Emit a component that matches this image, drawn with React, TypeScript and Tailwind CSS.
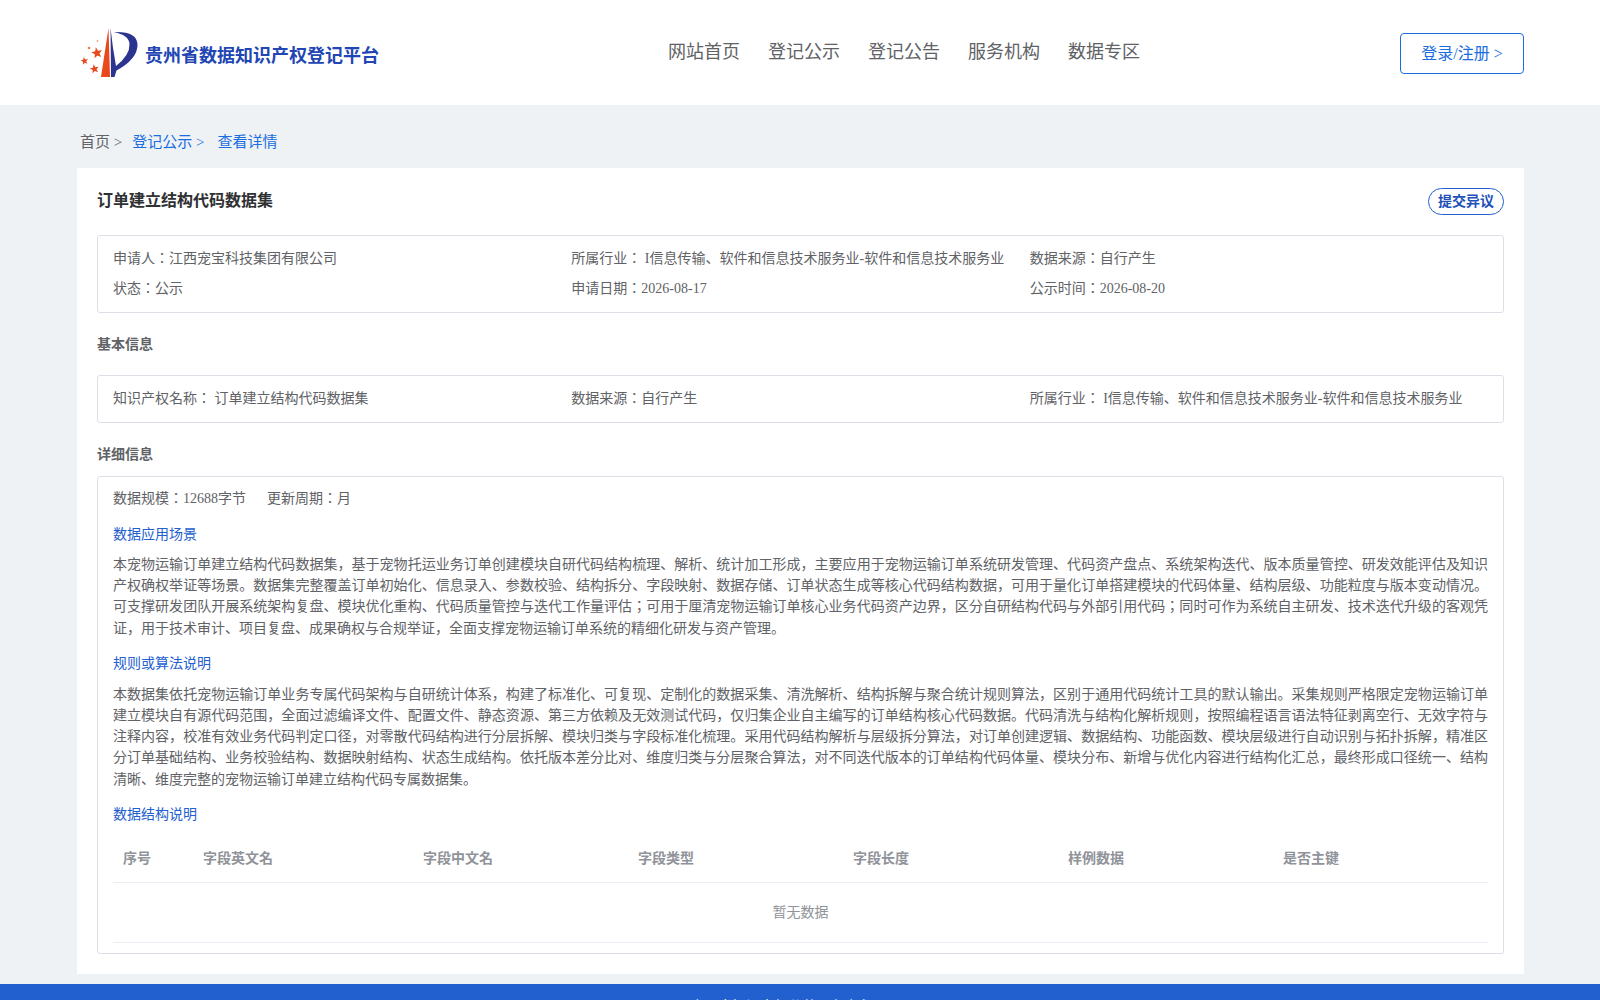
import React from 'react';

const infoBox = 'rounded-[3px] border border-[#dcdfe6] px-[15px]';
const blueLabel = 'text-[14px] leading-[21px] text-[#2260cf]';

const columns = [
  { title: '序号', width: 'w-[80px]' },
  { title: '字段英文名', width: 'w-[220px]' },
  { title: '字段中文名', width: 'w-[215px]' },
  { title: '字段类型', width: 'w-[215px]' },
  { title: '字段长度', width: 'w-[215px]' },
  { title: '样例数据', width: 'w-[215px]' },
  { title: '是否主键', width: 'w-[215px]' },
];

const Star = ({ x, y, r }: { x: number; y: number; r: number }) => {
  const pts = Array.from({ length: 10 }, (_, i) => {
    const a = -Math.PI / 2 + (i * Math.PI) / 5 - 0.2;
    const d = i % 2 === 0 ? r : r * 0.42;
    return `${(x + d * Math.cos(a)).toFixed(2)},${(y + d * Math.sin(a)).toFixed(2)}`;
  });
  return <polygon points={pts.join(' ')} fill="#e8481c" />;
};

const Logo = () => (
  <svg width="58" height="50" viewBox="0 0 58 50" className="shrink-0">
    {/* red wedge */}
    <path d="M21 49 L28.5 0 L30 49 Z" fill="#e8481c" />
    {/* blue stem and bowl */}
    <path d="M30.5 0 L31 49 L34.5 49 L36.5 42.5 Q57.5 31 57.5 17 Q57.5 3 33.5 4 Q49 7 49.5 16 Q50 27 36 38 L33 20 Z" fill="#2b3590" />
    <Star x={17} y={25} r={5.8} />
    <Star x={4.5} y={33} r={4} />
    <Star x={14.5} y={41} r={4.8} />
    <circle cx="9" cy="20" r="1.3" fill="#ee7a55" />
    <circle cx="17.5" cy="13" r="0.9" fill="#ee9a80" />
  </svg>
);

const InfoCell = ({ children }: { children: React.ReactNode }) => (
  <div className="whitespace-nowrap text-[14px] leading-[30px] text-[#606266]">{children}</div>
);

export default function App() {
  return (
    <div className="h-[1000px] overflow-hidden bg-[#eff2f5] font-['Liberation_Serif','Noto_Sans_CJK_JP',serif]">
      <header className="flex h-[105px] items-center justify-between bg-white pl-[80px] pr-[76px]">
        <div className="flex items-center">
          <Logo />
          <span className="ml-[7px] mt-[7px] text-[18px] font-bold text-[#2146b4]">贵州省数据知识产权登记平台</span>
        </div>
        <nav className="ml-[29px] flex gap-[28px] text-[18px] text-[#606266]">
          <span>网站首页</span>
          <span>登记公示</span>
          <span>登记公告</span>
          <span>服务机构</span>
          <span>数据专区</span>
        </nav>
        <button className="mt-[1px] h-[41px] w-[124px] rounded-[4px] border border-[#1a6ee0] pt-[2px] text-[16px] text-[#1a6ee0]">
          登录/注册 &gt;
        </button>
      </header>

      <div className="mx-[76px] flex h-[63px] items-center pl-[4px] pt-[12px] text-[15px] text-[#606266]">
        <span>首页 &gt;</span>
        <span className="ml-[10px] text-[#1a6ee0]">登记公示 &gt;</span>
        <span className="ml-[13px] text-[#1a6ee0]">查看详情</span>
      </div>

      <main className="ml-[77px] mr-[76px] h-[806px] bg-white px-[20px] pt-[20px]">
        <div className="flex h-[47px] items-start justify-between">
          <h1 className="mt-[1px] text-[16px] font-bold leading-[24px] text-[#303133]">订单建立结构代码数据集</h1>
          <button className="h-[27px] rounded-[14px] border border-[#2260cf] px-[9px] text-[14px] font-bold text-[#2050b8]">
            提交异议
          </button>
        </div>

        <div className={`${infoBox} h-[78px] py-[8px]`}>
          <div className="grid grid-cols-3">
            <InfoCell>申请人：江西宠宝科技集团有限公司</InfoCell>
            <InfoCell>所属行业： I信息传输、软件和信息技术服务业-软件和信息技术服务业</InfoCell>
            <InfoCell>数据来源：自行产生</InfoCell>
            <InfoCell>状态：公示</InfoCell>
            <InfoCell>申请日期：2026-08-17</InfoCell>
            <InfoCell>公示时间：2026-08-20</InfoCell>
          </div>
        </div>

        <h2 className="mt-[21px] text-[14px] font-bold leading-[21px] text-[#606266]">基本信息</h2>
        <div className={`${infoBox} mt-[20px] h-[48px] py-[8px]`}>
          <div className="grid grid-cols-3">
            <InfoCell>知识产权名称： 订单建立结构代码数据集</InfoCell>
            <InfoCell>数据来源：自行产生</InfoCell>
            <InfoCell>所属行业： I信息传输、软件和信息技术服务业-软件和信息技术服务业</InfoCell>
          </div>
        </div>

        <h2 className="mt-[21px] text-[14px] font-bold leading-[21px] text-[#606266]">详细信息</h2>
        <div className={`${infoBox} mt-[11px] h-[478px] pt-[11px]`}>
          <div className="text-[14px] leading-[21px] text-[#606266]">
            <span>数据规模：12688字节</span>
            <span className="ml-[21px]">更新周期：月</span>
          </div>
          <div className={`${blueLabel} mt-[15px]`}>数据应用场景</div>
          <p className="mt-[9px] text-justify text-[14px] leading-[21.2px] text-[#606266]">
            本宠物运输订单建立结构代码数据集，基于宠物托运业务订单创建模块自研代码结构梳理、解析、统计加工形成，主要应用于宠物运输订单系统研发管理、代码资产盘点、系统架构迭代、版本质量管控、研发效能评估及知识产权确权举证等场景。数据集完整覆盖订单初始化、信息录入、参数校验、结构拆分、字段映射、数据存储、订单状态生成等核心代码结构数据，可用于量化订单搭建模块的代码体量、结构层级、功能粒度与版本变动情况。可支撑研发团队开展系统架构复盘、模块优化重构、代码质量管控与迭代工作量评估；可用于厘清宠物运输订单核心业务代码资产边界，区分自研结构代码与外部引用代码；同时可作为系统自主研发、技术迭代升级的客观凭证，用于技术审计、项目复盘、成果确权与合规举证，全面支撑宠物运输订单系统的精细化研发与资产管理。
          </p>
          <div className={`${blueLabel} mt-[14px]`}>规则或算法说明</div>
          <p className="mt-[10px] text-justify text-[14px] leading-[21.2px] text-[#606266]">
            本数据集依托宠物运输订单业务专属代码架构与自研统计体系，构建了标准化、可复现、定制化的数据采集、清洗解析、结构拆解与聚合统计规则算法，区别于通用代码统计工具的默认输出。采集规则严格限定宠物运输订单建立模块自有源代码范围，全面过滤编译文件、配置文件、静态资源、第三方依赖及无效测试代码，仅归集企业自主编写的订单结构核心代码数据。代码清洗与结构化解析规则，按照编程语言语法特征剥离空行、无效字符与注释内容，校准有效业务代码判定口径，对零散代码结构进行分层拆解、模块归类与字段标准化梳理。采用代码结构解析与层级拆分算法，对订单创建逻辑、数据结构、功能函数、模块层级进行自动识别与拓扑拆解，精准区分订单基础结构、业务校验结构、数据映射结构、状态生成结构。依托版本差分比对、维度归类与分层聚合算法，对不同迭代版本的订单结构代码体量、模块分布、新增与优化内容进行结构化汇总，最终形成口径统一、结构清晰、维度完整的宠物运输订单建立结构代码专属数据集。
          </p>
          <div className={`${blueLabel} mt-[14px]`}>数据结构说明</div>

          <div className="mt-[10px] flex h-[48px] items-center border-b border-[#ebeef5] text-[14px] font-bold text-[#909399]">
            {columns.map((col) => (
              <div key={col.title} className={`${col.width} pl-[10px]`}>
                {col.title}
              </div>
            ))}
          </div>
          <div className="flex h-[60px] items-center justify-center border-b border-[#ebeef5] text-[14px] text-[#909399]">
            暂无数据
          </div>
        </div>
      </main>

      <footer className="mt-[10px] h-[60px] bg-[#2260cf] pr-[48px] pt-[12px] text-center text-[14px] leading-[21px] text-white">
        ©贵州省知识产权公共服务中心
      </footer>
    </div>
  );
}
